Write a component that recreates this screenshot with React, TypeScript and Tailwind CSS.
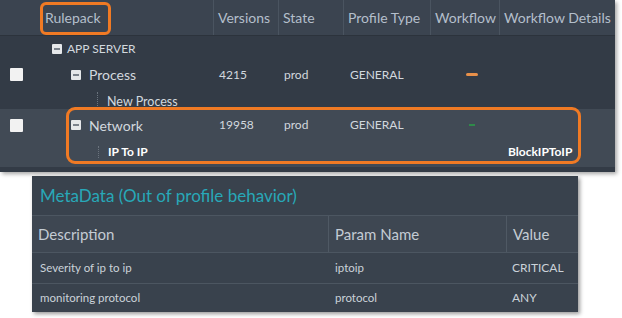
// ─── Rulepack screenshot ─────────────────────────────────────────────────────

const font = { fontFamily: 'Lato, "Open Sans", sans-serif' }

function Check() {
  return <span className="block h-[13px] w-[13px] bg-[#f2f2f2] rounded-[1px]" />
}

function Minus() {
  return (
    <span className="flex h-[10px] w-[10px] items-center justify-center bg-[#e6e8ea] rounded-[1px]">
      <span className="block h-[2px] w-[6px] bg-[#7b828b]" />
    </span>
  )
}

const cols = 'grid grid-cols-[40px_173px_65px_65px_87px_69px_1fr]'

function TopPanel() {
  return (
    <div className="relative w-[615px] h-[172px] bg-[#333b46] shadow-[2px_2px_4px_rgba(0,0,0,0.35)]">
      {/* header */}
      <div className={`${cols} h-[36px] bg-[#3b4450] border-b border-[#2c333c] text-[14px] text-[#b4bfcb]`}>
        <div />
        <div className="flex items-center pl-[5px]">Rulepack</div>
        {['Versions', 'State', 'Profile Type', 'Workflow', 'Workflow Details'].map((h) => (
          <div key={h} className="flex items-center pl-[4px] border-l border-[#4a5460] whitespace-nowrap">
            {h}
          </div>
        ))}
      </div>

      {/* APP SERVER */}
      <div className={`${cols} h-[25px] text-[12px] text-[#d2d8de]`}>
        <div />
        <div className="flex items-center gap-[5px] pl-[12px]">
          <Minus />
          <span>APP SERVER</span>
        </div>
      </div>

      {/* Process */}
      <div className={`${cols} h-[27px] text-[12px] text-[#d2d8de]`}>
        <div className="flex items-center pl-[10px]">
          <Check />
        </div>
        <div className="flex items-center gap-[8px] pl-[31px] text-[14px]">
          <Minus />
          <span>Process</span>
        </div>
        <div className="flex items-center pl-[6px]">4215</div>
        <div className="flex items-center pl-[6px]">prod</div>
        <div className="flex items-center pl-[7px]">GENERAL</div>
        <div className="flex items-center justify-center">
          <span className="block h-[3px] w-[12px] rounded-full bg-[#e8904a] ml-[14px]" />
        </div>
      </div>

      {/* New Process */}
      <div className={`${cols} h-[22px] text-[12.5px] text-[#d2d8de]`}>
        <div />
        <div className="flex items-end pb-0 pl-[57px]">
          <span className="mr-[9px] mb-[4px] h-[14px] border-l border-dotted border-[#6a737d]" />
          <span className="leading-[16px]">New Process</span>
        </div>
      </div>

      {/* Network section */}
      <div className="bg-[#414a55] h-[58px] mt-[-1px]">
        <div className={`${cols} h-[32px] text-[12px] text-[#d2d8de]`}>
          <div className="flex items-center pl-[10px]">
            <Check />
          </div>
          <div className="flex items-center gap-[8px] pl-[31px] text-[14px]">
            <Minus />
            <span>Network</span>
          </div>
          <div className="flex items-center pl-[6px]">19958</div>
          <div className="flex items-center pl-[6px]">prod</div>
          <div className="flex items-center pl-[7px]">GENERAL</div>
          <div className="flex items-center justify-center">
            <span className="block h-[2px] w-[6px] bg-[#2f8a4a] ml-[14px]" />
          </div>
        </div>
        <div className={`${cols} h-[22px] text-[12px] font-bold text-white`}>
          <div />
          <div className="flex items-center pl-[58px]">
            <span className="mr-[9px] h-[12px] border-l border-dotted border-[#6a737d]" />
            <span>IP To IP</span>
          </div>
          <div />
          <div />
          <div />
          <div />
          <div className="flex items-center pl-[9px]">BlockIPToIP</div>
        </div>
      </div>

      {/* annotations */}
      <div className="absolute left-[40px] top-[2px] w-[71px] h-[33px] border-[3px] border-[#f07a24] rounded-[6px]" />
      <div className="absolute left-[66px] top-[107px] w-[515px] h-[57px] border-[3px] border-[#f07a24] rounded-[9px]" />
    </div>
  )
}

const metaCols = 'grid grid-cols-[296px_178px_1fr]'

function MetaPanel() {
  const rows = [
    ['Severity of ip to ip', 'iptoip', 'CRITICAL'],
    ['monitoring protocol', 'protocol', 'ANY'],
  ]
  return (
    <div className="ml-[32px] mt-[4px] w-[546px] bg-[#39424d] shadow-[2px_2px_4px_rgba(0,0,0,0.4)]">
      <div className="h-[40px] flex items-center pl-[8px] text-[17px] text-[#28a8b8] border-b border-[#4c5661]">
        MetaData (Out of profile behavior)
      </div>
      <div className={`${metaCols} h-[37px] bg-[#3e4752] text-[15px] text-[#c4ccd4] border-b border-[#4c5661]`}>
        <div className="flex items-center pl-[6px]">Description</div>
        <div className="flex items-center pl-[6px] border-l border-[#4f5964]">Param Name</div>
        <div className="flex items-center pl-[6px] border-l border-[#4f5964]">Value</div>
      </div>
      {rows.map((r, i) => (
        <div
          key={r[0]}
          className={`${metaCols} text-[11.5px] text-[#cbd2d9] ${i === 0 ? 'h-[31px] border-b border-[#4c5661]' : 'h-[28px]'}`}
        >
          <div className="flex items-center pl-[8px]">{r[0]}</div>
          <div className="flex items-center pl-[7px]">{r[1]}</div>
          <div className="flex items-center pl-[6px] text-[12px]">{r[2]}</div>
        </div>
      ))}
    </div>
  )
}

export default function App() {
  return (
    <div className="w-[622px] h-[318px] bg-white overflow-hidden" style={font}>
      <TopPanel />
      <MetaPanel />
    </div>
  )
}
